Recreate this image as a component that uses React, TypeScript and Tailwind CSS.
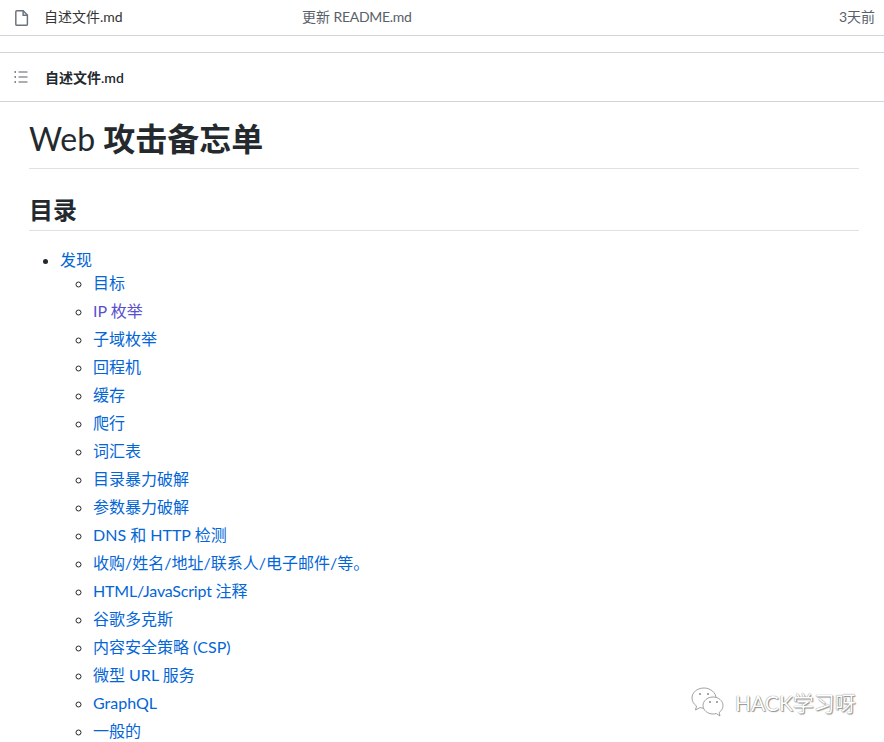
const font = { fontFamily: 'Lato, "Noto Sans CJK SC", sans-serif' };
const items = ["目标","IP 枚举","子域枚举","回程机","缓存","爬行","词汇表","目录暴力破解","参数暴力破解","DNS 和 HTTP 检测","收购/姓名/地址/联系人/电子邮件/等。","HTML/JavaScript 注释","谷歌多克斯","内容安全策略 (CSP)","微型 URL 服务","GraphQL","一般的"];

function Wechat() {
  return (
    <svg width="36" height="32" viewBox="0 0 36 32" fill="white" stroke="#8a8a8a" strokeWidth="0.8" className="absolute left-[690px] top-[686px]">
      <path d="M14 2C7 2 2 6.500 2 12c0 3.200 1.700 6 4.500 8L5.500 24l4.500-2.400c1.300.4 2.600.6 4 .6 6.500 0 12-4.500 12-10S20.500 2 14 2z" />
      <path d="M23 11c-5.500 0-10 3.800-10 8.500S17.500 28 23 28c1.100 0 2.200-.2 3.200-.5L30 30l-.9-3.500c2.400-1.600 3.900-4.100 3.900-7C33 14.800 28.500 11 23 11z" />
      <circle cx="10" cy="8" r="1" fill="#8a8a8a" stroke="none" />
      <circle cx="18" cy="8" r="1" fill="#8a8a8a" stroke="none" />
      <circle cx="20" cy="16" r="1" fill="#8a8a8a" stroke="none" />
      <circle cx="27" cy="16" r="1" fill="#8a8a8a" stroke="none" />
    </svg>
  );
}

export default function App() {
  return (
    <div style={font} className="relative h-[742px] w-[884px] overflow-hidden bg-white text-[#24292e]">
      <div className="flex h-[36px] items-center border-b border-[#d1d5da] pb-[3px] text-[14px]">
        <svg width="18" height="18" viewBox="0 0 16 16" fill="none" stroke="#6a737d" strokeWidth="1.300" className="ml-[13px] mt-[3px]">
          <path d="M3.500 1.500h5.500l3.800 3.800v8.200a1 1 0 0 1-1 1H3.500a1 1 0 0 1-1-1v-11a1 1 0 0 1 1-1z" />
          <path d="M9 1.500v4h3.800" />
        </svg>
        <span className="ml-[13px] w-[258px] text-[#333]">自述文件.md</span>
        <span className="text-[#586069]">更新 <span className="tracking-[-0.3px]">README.md</span></span>
        <span className="ml-auto mr-[9px] text-[#586069]">3天前</span>
      </div>
      <div className="mt-[16px] flex h-[50px] items-center border-y border-[#d1d5da] pt-[1px]">
        <svg width="16" height="16" viewBox="0 0 16 16" fill="none" stroke="#586069" strokeWidth="1.200" className="ml-[13px] -mt-[2px]">
          <path d="M5.500 3h9M5.500 8h9M5.500 13h9" />
          <path d="M1.500 3h1.500M1.500 8h1.500M1.500 13h1.500" strokeWidth="1.500" />
        </svg>
        <span className="ml-[16px] text-[14px] font-semibold">自述文件.md</span>
      </div>
      <div className="px-[29px] pr-[25px]">
        <h1 className="mt-[12px] flex h-[55px] items-center border-b border-[#dfe2e5] pb-[4px] text-[32px] font-semibold">
          <span className="font-normal">Web&nbsp;</span>攻击备忘单
        </h1>
        <h2 className="mt-[24px] flex h-[38px] items-center border-b border-[#dfe2e5] pb-[4px] text-[24px] font-semibold">目录</h2>
        <ul className="mt-[15px] list-disc pl-[31px] text-[16px] leading-[28px]">
          <li>
            <a className="block h-[23px] leading-[28px] text-[#0366d6]">发现</a>
            <ul className="list-[circle] pl-[33px]">
              {items.map((t) => (
                <li key={t} className="h-[28px]">
                  <a className={t === "IP 枚举" ? "text-[#5a4fcf]" : t === "HTML/JavaScript 注释" ? "tracking-[-0.2px] text-[#0366d6]" : "text-[#0366d6]"}>{t}</a>
                </li>
              ))}
            </ul>
          </li>
        </ul>
      </div>
      <Wechat />
      <span className="absolute left-[735px] top-[689px] text-[21px] leading-[28px] text-white [text-shadow:0_0_1px_#555,1px_1px_1px_#999]">HACK学习呀</span>
    </div>
  );
}
